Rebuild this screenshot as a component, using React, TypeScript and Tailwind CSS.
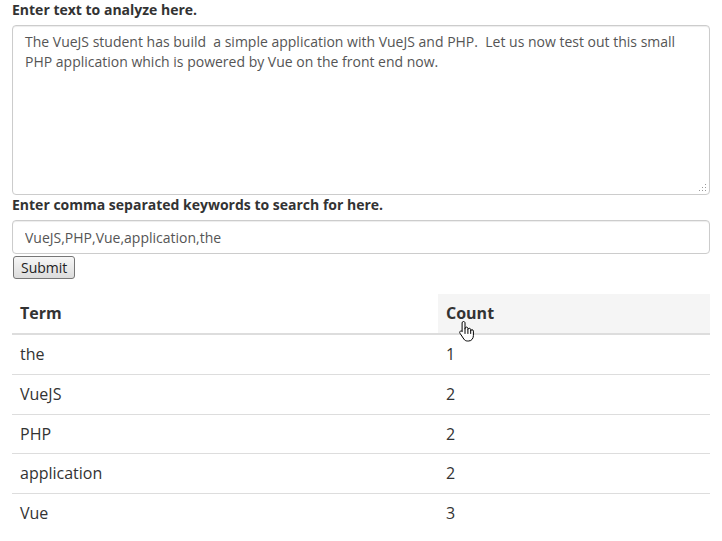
import React from 'react';

const rows: [string, number][] = [
  ['the', 1],
  ['VueJS', 2],
  ['PHP', 2],
  ['application', 2],
  ['Vue', 3],
];

const HandCursor = () => (
  <svg width="18" height="22" viewBox="0 0 18 22" className="absolute left-[458px] top-[320px]">
    <path
      d="M5.5 1.5c.8 0 1.5.6 1.5 1.4v6.3l.1-.9c.1-.7.7-1.2 1.4-1.2s1.4.6 1.4 1.3v1.1c.1-.7.7-1.2 1.4-1.2.8 0 1.4.6 1.4 1.3v1.2c.1-.6.7-1.1 1.3-1.1.8 0 1.4.6 1.4 1.4v4.4c0 2.8-1.7 5.5-4.8 5.5H9.4c-1.6 0-2.7-.7-3.6-2L2 13.3c-.5-.7-.4-1.6.3-2.1.6-.4 1.4-.3 1.9.3l-.2.1.1.1V2.9c0-.8.6-1.4 1.4-1.4z"
      fill="#fff"
      stroke="#000"
      strokeWidth="1"
      strokeLinejoin="round"
    />
    <path d="M7 9.5v4M9.9 9.8v3.7M12.7 11v2.5" stroke="#000" strokeWidth="1" strokeLinecap="round" />
  </svg>
);

// little dotted grip like the one in the screenshot
const Grip = () => (
  <svg width="8" height="8" viewBox="0 0 8 8" className="absolute right-[3px] bottom-[3px]">
    <rect x="6" y="0" width="1" height="1" fill="#999" />
    <rect x="3" y="3" width="1" height="1" fill="#999" />
    <rect x="6" y="3" width="1" height="1" fill="#999" />
    <rect x="0" y="6" width="1" height="1" fill="#999" />
    <rect x="3" y="6" width="1" height="1" fill="#999" />
    <rect x="6" y="6" width="1" height="1" fill="#999" />
  </svg>
);

export default function App() {
  return (
    <div className="relative min-h-screen bg-white px-[12px] text-[#333] font-['Open_Sans',sans-serif] text-[14px] leading-[20px]">
      <label className="block font-bold mb-[5px]">Enter text to analyze here.</label>
      <div className="relative">
        <textarea
          className="block w-full h-[170px] border border-[#ccc] rounded-[4px] px-[12px] py-[6px] text-[14px] leading-[20px] text-[#555] shadow-[inset_0_1px_1px_rgba(0,0,0,0.075)] outline-none resize-none"
          defaultValue="The VueJS student has build  a simple application with VueJS and PHP.  Let us now test out this small PHP application which is powered by Vue on the front end now."
        />
        <Grip />
      </div>
      <label className="block font-bold mb-[5px]">Enter comma separated keywords to search for here.</label>
      <input
        className="block w-full h-[34px] border border-[#ccc] rounded-[4px] px-[12px] py-[6px] text-[14px] text-[#555] shadow-[inset_0_1px_1px_rgba(0,0,0,0.075)] outline-none"
        defaultValue="VueJS,PHP,Vue,application,the"
      />
      <button className="mt-[2px] ml-[1px] h-[23px] px-[7px] border border-[#767676] rounded-[3px] bg-gradient-to-b from-[#f7f7f7] to-[#dcdcdc] text-[14px] leading-[19px] text-[#222]">
        Submit
      </button>
      <table className="mt-[15px] w-full border-collapse text-[16px] leading-[22.86px]">
        <thead>
          <tr>
            <th className="text-left font-bold p-[8px] border-b-2 border-[#ddd] w-[426px]">Term</th>
            <th className="text-left font-bold p-[8px] border-b-2 border-[#ddd] bg-[#f5f5f5]">Count</th>
          </tr>
        </thead>
        <tbody>
          {rows.map(([term, count], i) => (
            <tr key={term}>
              <td className={`p-[8px] ${i > 0 ? 'border-t border-[#ddd]' : ''}`}>{term}</td>
              <td className={`p-[8px] ${i > 0 ? 'border-t border-[#ddd]' : ''}`}>{count}</td>
            </tr>
          ))}
        </tbody>
      </table>
      <HandCursor />
    </div>
  );
}
